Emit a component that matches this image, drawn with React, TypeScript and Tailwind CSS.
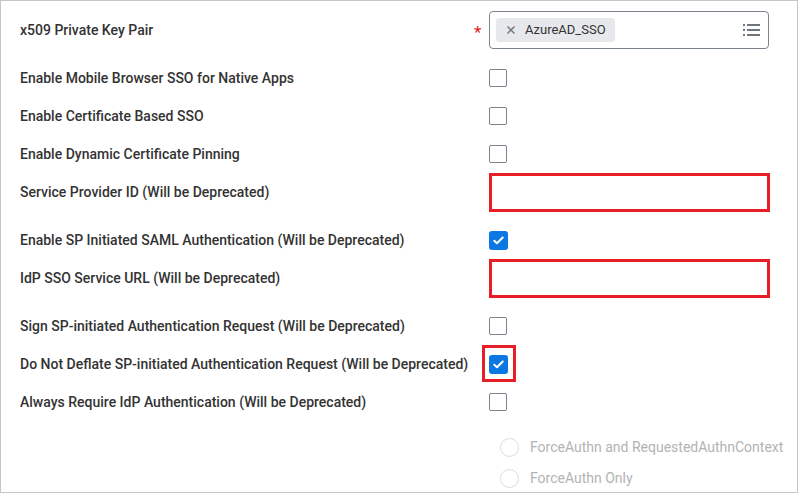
import React from 'react';

type Row =
    | { kind: 'select'; label: string }
    | { kind: 'check'; label: string; checked?: boolean; highlight?: boolean; className: string }
    | { kind: 'input'; label: string; className: string };

const ROWS: Row[] = [
    { kind: 'select', label: 'x509 Private Key Pair' },
    { kind: 'check', label: 'Enable Mobile Browser SSO for Native Apps', className: 'mt-[10px]' },
    { kind: 'check', label: 'Enable Certificate Based SSO', className: '' },
    { kind: 'check', label: 'Enable Dynamic Certificate Pinning', className: '' },
    { kind: 'input', label: 'Service Provider ID (Will be Deprecated)', className: '' },
    { kind: 'check', label: 'Enable SP Initiated SAML Authentication (Will be Deprecated)', checked: true, className: 'mt-[10px]' },
    { kind: 'input', label: 'IdP SSO Service URL (Will be Deprecated)', className: '' },
    { kind: 'check', label: 'Sign SP-initiated Authentication Request (Will be Deprecated)', className: 'mt-[10px]' },
    { kind: 'check', label: 'Do Not Deflate SP-initiated Authentication Request (Will be Deprecated)', checked: true, highlight: true, className: '' },
    { kind: 'check', label: 'Always Require IdP Authentication (Will be Deprecated)', className: '' },
];

export default function App(): React.ReactNode {
    return (
        <div className="w-[799px] h-[494px] bg-white font-['Roboto',sans-serif] text-[14px]">
            <div className="w-[798px] h-[493px] border border-[#c6c6c6] pt-[10px]">
                {ROWS.map(row => (
                    <FormRow key={row.label} row={row} />
                ))}
                <div className="pl-[499px] mt-[11px] flex flex-col">
                    <Radio label="ForceAuthn and RequestedAuthnContext" />
                    <Radio label="ForceAuthn Only" />
                </div>
            </div>
        </div>
    );
}

const FormRow: React.FC<{ row: Row }> = ({ row }) => {
    if (row.kind === 'select') {
        return (
            <div className="flex items-center h-[38px]">
                <div className="w-[473px] pl-[19px] font-medium text-[#333]">{row.label}</div>
                <div className="w-[15px] text-[#e0191e] text-[17px] leading-none pt-[5px]">*</div>
                <div className="w-[280px] h-[38px] border border-[#7b838c] rounded-[4px] flex items-center pl-[6px] pr-[8px]">
                    <div className="h-[24px] bg-[#e6e8eb] rounded-[3px] flex items-center pl-[10px] pr-[9px] gap-[9px] text-[13px] text-[#333]">
                        <svg width="10" height="10" viewBox="0 0 10 10" className="text-[#6f757c]">
                            <path d="M1.5 1.5 L8.5 8.5 M8.5 1.5 L1.5 8.5" stroke="currentColor" strokeWidth="1.4" />
                        </svg>
                        <span>AzureAD_SSO</span>
                    </div>
                    <div className="ml-auto">
                        <svg width="17" height="14" viewBox="0 0 17 14" className="text-[#6f757c]">
                            <rect x="0" y="1" width="2" height="2" fill="currentColor" />
                            <rect x="4" y="1" width="13" height="2" fill="currentColor" />
                            <rect x="0" y="6" width="2" height="2" fill="currentColor" />
                            <rect x="4" y="6" width="13" height="2" fill="currentColor" />
                            <rect x="0" y="11" width="2" height="2" fill="currentColor" />
                            <rect x="4" y="11" width="13" height="2" fill="currentColor" />
                        </svg>
                    </div>
                </div>
            </div>
        );
    }

    if (row.kind === 'input') {
        return (
            <div className={`flex items-center h-[38px] ${row.className}`}>
                <div className="w-[488px] pl-[19px] font-medium text-[#333]">{row.label}</div>
                <div className="w-[281px] h-[39px] border-[3px] border-[#e81d25]" />
            </div>
        );
    }

    return (
        <div className={`flex items-center h-[38px] ${row.className}`}>
            <div className="w-[488px] pl-[19px] font-medium text-[#333]">{row.label}</div>
            <div className="relative">
                <Checkbox checked={row.checked} />
                {row.highlight && (
                    <div className="absolute left-[-7px] top-[-10px] w-[34px] h-[37px] border-[3px] border-[#e81d25]" />
                )}
            </div>
        </div>
    );
};

const Checkbox: React.FC<{ checked?: boolean }> = ({ checked }) =>
    checked ? (
        <div className="w-[19px] h-[19px] rounded-[3px] bg-[#0b77e3] flex items-center justify-center">
            <svg width="11" height="9" viewBox="0 0 11 9">
                <path d="M1.3 4.8 L4 7.3 L9.7 1.5" fill="none" stroke="white" strokeWidth="2" strokeLinecap="round" strokeLinejoin="round" />
            </svg>
        </div>
    ) : (
        <div className="w-[18px] h-[18px] rounded-[2px] border border-[#7b838c] bg-white" />
    );

const Radio: React.FC<{ label: string }> = ({ label }) => (
    <div className="flex items-center h-[31px]">
        <div className="w-[19px] h-[19px] rounded-full border border-[#dcdcdc] bg-white" />
        <span className="ml-[11px] text-[#b3b3b3]">{label}</span>
    </div>
);
